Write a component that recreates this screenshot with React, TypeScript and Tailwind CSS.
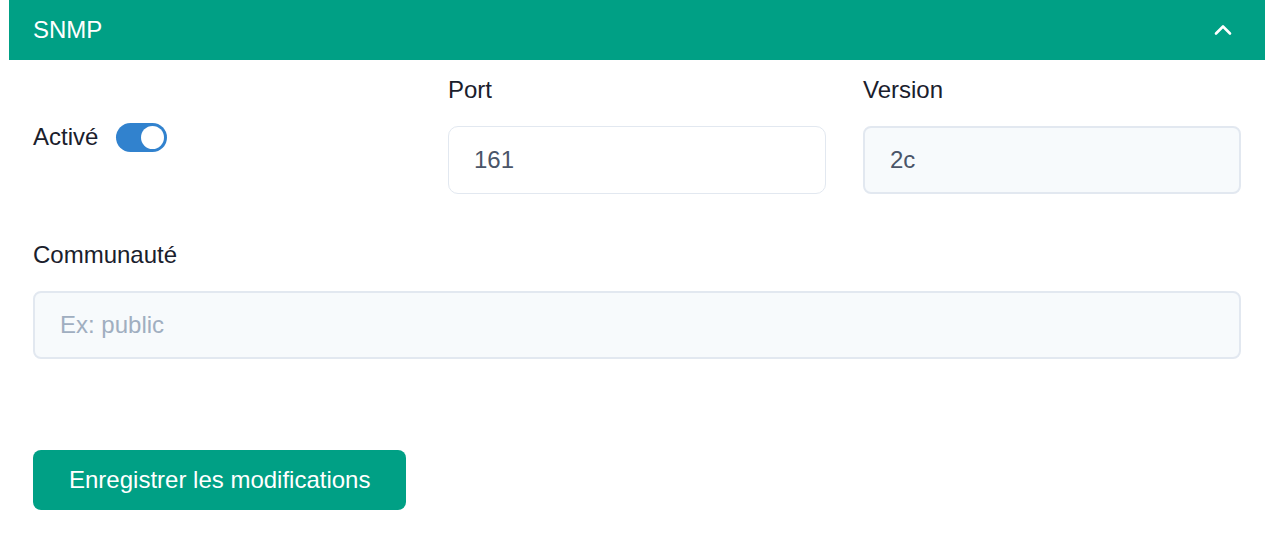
import { useState } from "react";

const font = { fontFamily: '"Liberation Sans", Arial, sans-serif' };

const Toggle = ({ on, onChange }: { on: boolean; onChange: (v: boolean) => void }) => (
  <button
    type="button"
    onClick={() => onChange(!on)}
    className={`flex h-[29px] w-[51px] items-center rounded-full p-[3px] ${
      on ? "justify-end bg-[#3182ce]" : "justify-start bg-[#cbd5e0]"
    }`}
  >
    <span className="block h-[23px] w-[23px] rounded-full bg-white" />
  </button>
);

export default function App() {
  const [open, setOpen] = useState(true);
  const [enabled, setEnabled] = useState(true);
  const [port, setPort] = useState("161");
  const [community, setCommunity] = useState("");

  return (
    <div className="min-h-screen bg-white px-[9px]" style={font}>
      <div
        className="flex h-[60px] cursor-pointer items-center justify-between bg-[#00a085] pl-6 pr-[30px] text-white"
        onClick={() => setOpen(!open)}
      >
        <span className="text-2xl">SNMP</span>
        <svg
          width="24"
          height="24"
          viewBox="0 0 24 24"
          fill="none"
          stroke="currentColor"
          strokeWidth="2.6"
          strokeLinecap="round"
          strokeLinejoin="round"
          className={open ? "" : "rotate-180"}
        >
          <path d="M5 15.5l7-7 7 7" />
        </svg>
      </div>

      {open && (
        <div className="px-6 pt-[14px] text-[#1a202c]">
          <div className="grid grid-cols-3 gap-[37px]">
            <div className="flex items-center gap-[18px] self-start pt-[47px]">
              <span className="text-2xl leading-8">Activé</span>
              <Toggle on={enabled} onChange={setEnabled} />
            </div>
            <div>
              <div className="mb-5 text-2xl leading-8">Port</div>
              <input
                value={port}
                onChange={(e) => setPort(e.target.value)}
                className="h-[68px] w-full rounded-[10px] border border-[#e2e8f0] bg-white px-[25px] text-2xl text-[#4a5568] outline-none"
              />
            </div>
            <div>
              <div className="mb-5 text-2xl leading-8">Version</div>
              <div className="flex h-[68px] w-full items-center rounded-[8px] border-2 border-[#e2e8f0] bg-[#f7fafc] px-[25px] text-2xl text-[#4a5568]">
                2c
              </div>
            </div>
          </div>

          <div className="mt-[45px]">
            <div className="mb-5 text-2xl leading-8">Communauté</div>
            <input
              value={community}
              onChange={(e) => setCommunity(e.target.value)}
              placeholder="Ex: public"
              className="h-[68px] w-full rounded-[8px] border-2 border-[#e2e8f0] bg-[#f7fafc] px-[25px] text-2xl text-[#4a5568] outline-none placeholder:text-[#a0aec0]"
            />
          </div>

          <button
            type="button"
            className="mt-[91px] h-[60px] rounded-[8px] bg-[#00a085] px-9 text-2xl text-white"
          >
            Enregistrer les modifications
          </button>
        </div>
      )}
    </div>
  );
}
